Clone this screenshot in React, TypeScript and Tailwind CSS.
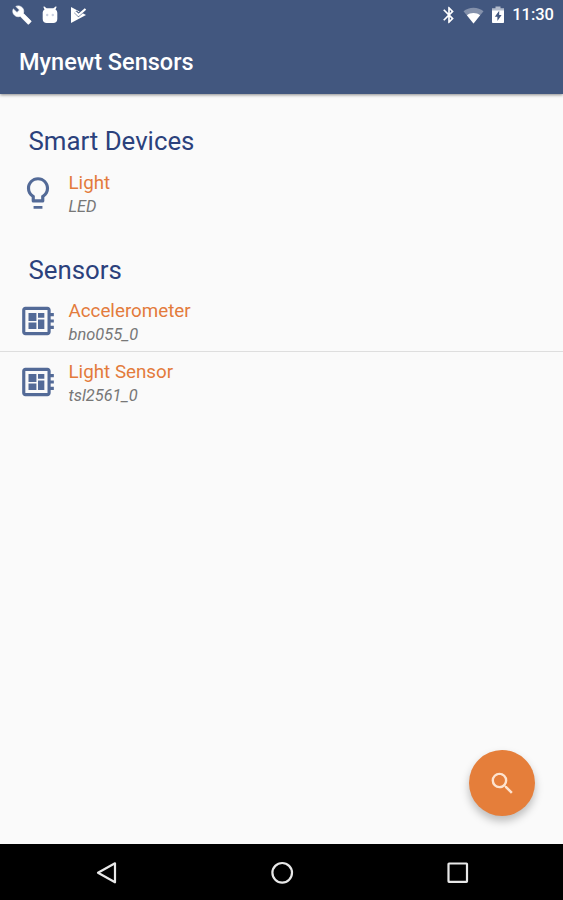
import React from "react";
import { MdBluetooth, MdDeveloperBoard, MdSearch } from "react-icons/md";

interface Device {
  name: string;
  detail: string;
}

type DeviceIcon = React.ComponentType<{ className?: string }>;

const smartDevices: Device[] = [{ name: "Light", detail: "LED" }];

const sensors: Device[] = [
  { name: "Accelerometer", detail: "bno055_0" },
  { name: "Light Sensor", detail: "tsl2561_0" },
];

const BulbIcon: DeviceIcon = ({ className }) => (
  <svg className={className} viewBox="0 0 24 24" fill="currentColor">
    <path d="M9.200 20.200h5.600v1.700H9.200zM12 2C8.140 2 5 5.140 5 9c0 2.380 1.190 4.470 3 5.740V17c0 .55.45 1 1 1h6c.55 0 1-.45 1-1v-2.260c1.810-1.270 3-3.360 3-5.740 0-3.860-3.140-7-7-7zm2.850 11.100l-.85.6V16h-4v-2.300l-.85-.6A4.997 4.997 0 0 1 7 9c0-2.760 2.240-5 5-5s5 2.240 5 5c0 1.630-.8 3.160-2.150 4.100z" />
  </svg>
);

const WrenchIcon: DeviceIcon = ({ className }) => (
  <svg
    className={className}
    viewBox="0 0 24 24"
    fill="currentColor"
    stroke="currentColor"
    strokeWidth="0.8"
  >
    <path d="M22.700 19l-9.100-9.100c.9-2.300.4-5-1.500-6.900-2-2-5-2.400-7.400-1.300L9 6 6 9 1.600 4.700C.4 7.100.9 10.100 2.900 12.100c1.900 1.900 4.600 2.400 6.900 1.500l9.100 9.100c.4.4 1 .4 1.400 0l2.300-2.300c.5-.4.5-1.100.1-1.400z" />
  </svg>
);

const DebugIcon: React.FC = () => (
  <svg className="h-[18px] w-[16px]" viewBox="0 0 16 18">
    <path
      fill="#fff"
      d="M2 0.300 4.600 2.300h6.800L14 0.300l.6.700-1.100 2.400C14.800 4.300 15.300 5.500 15.300 7v6c0 2.400-1.600 4-4 4H4.700c-2.400 0-4-1.600-4-4V7c0-1.500.5-2.700 1.800-3.600L1.400 1z"
    />
    <circle cx="5.200" cy="9" r="1.200" fill="#c9d0e0" />
    <circle cx="10.800" cy="9" r="1.200" fill="#c9d0e0" />
  </svg>
);

const PlayCheckIcon: React.FC = () => (
  <svg className="h-[18px] w-[17px]" viewBox="0 0 17 18">
    <path fill="#fff" d="M1 1 16 9 1 17z" />
    <path
      fill="none"
      stroke="#42577f"
      strokeWidth="3.600"
      d="M5.500 5.800 8.500 8.800 16 2"
    />
    <path
      fill="none"
      stroke="#fff"
      strokeWidth="2.200"
      d="M5.200 6 8.500 9 15.500 3"
    />
  </svg>
);

const WifiIcon: React.FC = () => (
  <svg className="h-[17px] w-[21px]" viewBox="0 0 21 17">
    <path
      fill="#fff"
      fillOpacity="0.35"
      d="M10.500 16.500 0.500 4.200C3.200 2 6.700 0.800 10.500 0.800s7.300 1.200 10 3.400z"
    />
    <path
      fill="#fff"
      d="M10.500 16.500 3.900 8.300c1.800-1.500 4.100-2.300 6.600-2.300s4.800.8 6.600 2.300z"
    />
  </svg>
);

const BatteryIcon: React.FC = () => (
  <svg className="h-[18px] w-[12px]" viewBox="0 0 12 18">
    <path fill="#fff" fillOpacity="0.6" d="M3.500 0.500h5v1.800H12V5H0V2.300h3.500z" />
    <path fill="#fff" d="M0 4.500h12v11.700a.8.8 0 0 1-.8.8H.8a.8.8 0 0 1-.8-.8z" />
    <path fill="#42577f" d="M7.200 4.800 2.800 10.800h2.600v4.200l4.200-6H7.200z" />
  </svg>
);

const StatusBar: React.FC = () => (
  <div className="flex h-7 items-center justify-between pt-0.5 pr-[9px] pl-3">
    <div className="flex items-center">
      <WrenchIcon className="mr-2.5 size-5" />
      <DebugIcon />
      <span className="w-3" />
      <PlayCheckIcon />
    </div>
    <div className="flex items-center">
      <MdBluetooth className="mr-1 size-5" />
      <WifiIcon />
      <span className="w-2" />
      <BatteryIcon />
      <span className="ml-2 text-[16.500px] leading-none font-medium">
        11:30
      </span>
    </div>
  </div>
);

const DeviceRow: React.FC<{ device: Device; icon: DeviceIcon }> = ({
  device,
  icon: Icon,
}) => (
  <div className="flex h-[60px] items-center pl-[19px]">
    <Icon className="mb-px size-[38px] text-[#536a97]" />
    <div className="ml-[11.500px] pt-[3px]">
      <p className="text-[18.800px] leading-[23px] text-[#e37b3c]">
        {device.name}
      </p>
      <p className="text-[16.400px] leading-[23px] text-[#777] italic">
        {device.detail}
      </p>
    </div>
  </div>
);

const DeviceSection: React.FC<{
  title: string;
  devices: Device[];
  icon: DeviceIcon;
}> = ({ title, devices, icon }) => (
  <section>
    <h2 className="mb-0.5 flex h-10 items-center pl-[28.500px] text-[25.800px] text-[#2b417c]">
      {title}
    </h2>
    <div className="divide-y divide-[#dedede]">
      {devices.map((device) => (
        <DeviceRow key={device.name} device={device} icon={icon} />
      ))}
    </div>
  </section>
);

const NavigationBar: React.FC = () => (
  <nav className="flex h-14 justify-center bg-black">
    <svg
      className="h-14 w-[410px]"
      viewBox="0 0 410 56"
      fill="none"
      stroke="#e8e8e8"
      strokeWidth="2.200"
      strokeLinejoin="round"
    >
      <path d="M38 19.300v19L21 28.800z" />
      <circle cx="205.200" cy="28.800" r="9.800" />
      <rect x="371.500" y="19.500" width="18.500" height="18.300" rx="0.500" />
    </svg>
  </nav>
);

const App: React.FC = () => {
  return (
    <div className="flex h-[900px] w-[563px] flex-col overflow-hidden bg-[#fafafa] font-[Roboto,sans-serif]">
      <header className="h-[94px] bg-[#42577f] text-white shadow-[0_1px_3px_rgba(0,0,0,0.45)]">
        <StatusBar />
        <h1 className="flex h-[66px] items-center pt-1 pl-[19px] text-[23.500px] font-medium">
          Mynewt Sensors
        </h1>
      </header>
      <main className="relative flex-1 pt-[27px]">
        <div className="flex flex-col gap-[27px]">
          <DeviceSection
            title="Smart Devices"
            devices={smartDevices}
            icon={BulbIcon}
          />
          <DeviceSection
            title="Sensors"
            devices={sensors}
            icon={MdDeveloperBoard}
          />
        </div>
        <button className="absolute right-7 bottom-7 flex size-[66px] items-center justify-center rounded-full bg-[#e57e3a] text-[#fde3cf] shadow-[0_5px_8px_rgba(0,0,0,0.25)]">
          <MdSearch className="size-[29px]" />
        </button>
      </main>
      <NavigationBar />
    </div>
  );
};

export default App;
